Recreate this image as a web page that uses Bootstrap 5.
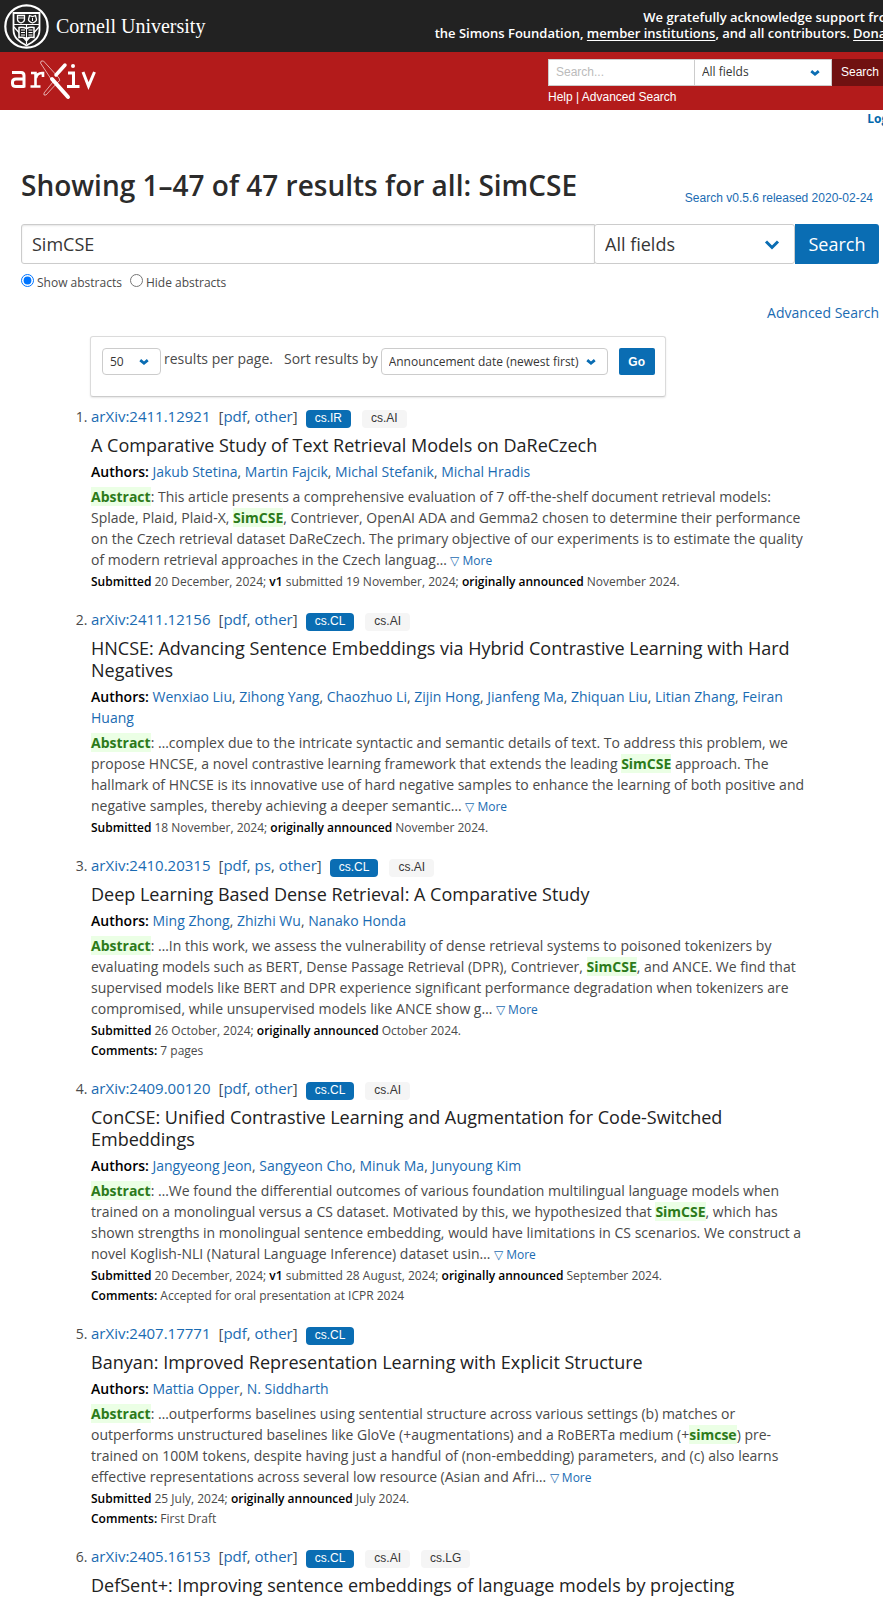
<!DOCTYPE html>
<html lang="en">
<head>
<meta charset="utf-8">
<meta name="viewport" content="width=device-width, initial-scale=1">
<title>Search | arXiv e-print repository</title>
<link href="https://cdn.jsdelivr.net/npm/bootstrap@5.3.0/dist/css/bootstrap.min.css" rel="stylesheet">
<style>
  :root { --ax-blue: #0a6db3; --ax-chev: url("data:image/svg+xml,%3Csvg xmlns='http://www.w3.org/2000/svg' viewBox='0 0 16 12'%3E%3Cpath d='M2 3l6 6 6-6' fill='none' stroke='%230a6db3' stroke-width='3'/%3E%3C/svg%3E"); --ax-chev-small: url("data:image/svg+xml,%3Csvg xmlns='http://www.w3.org/2000/svg' viewBox='0 0 16 12'%3E%3Cpath d='M2 3l6 5 6-5' fill='none' stroke='%230a6db3' stroke-width='4.500'/%3E%3C/svg%3E"); }
  body { font: 14px/21px "Open Sans", sans-serif; color: #4a4a4a; overflow-x: hidden; }
  a { color: #1a6bb2; text-decoration: none; }
  .arial { font-family: "Liberation Sans", Arial, sans-serif; }
  .wide { margin-right: -10px; }
  .banner { background: #222; height: 52px; color: #fff; }
  .banner a { color: #fff; text-decoration: underline; text-underline-offset: 2px; }
  .banner-name { font: 20px/24px "Liberation Serif", serif; margin-left: 7px; }
  .support { font-size: 13px; line-height: 16px; font-weight: 600; padding-bottom: 2px; margin-right: -6px; }
  .redbar { background: #b31b1b; height: 58px; color: #fff; }
  .redbar a { color: #fff; }
  .redbar form { padding-top: 7px; }
  .redbar .logo { margin: 7px 0 0 7px; }
  .redbar .form-control, .redbar .form-select, .redbar .btn { height: 27px; font-size: 12px; line-height: 18px; border-radius: 0; padding-top: 3px; padding-bottom: 4px; }
  .redbar .form-control { width: 147px; padding-left: 7px; border-color: #ccc; }
  .redbar .form-select { width: 137px; padding-left: 7px; border-color: #ccc; border-left: 0; font-family: "Open Sans", sans-serif; }
  .redbar .form-control::placeholder { color: #bbb; }
  .redbar .btn { background: #701111; color: #fff; width: 61px; padding-left: 8px; text-align: left; padding-top: 2px; }
  .help { font-size: 12px; line-height: 22px; }
  .form-select { background-image: var(--ax-chev-small); background-size: 10px 8px; background-position: right 11px center; color: #363636; }
  .form-select, .form-control { border-color: #ccc; }
  .login-row { margin-right: -20px; }
  .login { font-size: 12px; line-height: 18px; font-weight: 700; color: #0068ac; }
  .content { padding: 40px 4px 0 21px; }
  h1 { font-size: 28px; line-height: 35px; font-weight: 600; color: #2b2b2b; }
  .version { font-size: 12px; line-height: 16px; margin-right: 6px; }
  .title-row { padding-bottom: 18px; }
  .title-row h1 { padding-bottom: 3px; }
  .query .form-control, .query .form-select, .query .btn { height: 40px; font-size: 18px; line-height: 27px; padding-top: 5px; padding-bottom: 5px; border-radius: 3px; color: #363636; }
  .query .form-control { padding-left: 10px; border-top-right-radius: 0; border-bottom-right-radius: 0; box-shadow: inset 0 1px 2px rgba(10,10,10,.1); }
  .query .form-select { width: 201px; flex: none; margin-left: -1px; padding-left: 10px; background-image: var(--ax-chev); background-size: 16px 13px; background-position: right 14px center; }
  .query .btn { width: 84px; flex: none; padding-left: 0; padding-right: 0; background: var(--ax-blue); color: #fff; border: 0; border-radius: 0 3px 3px 0; }
  .choice { font-size: 12px; line-height: 18px; margin-top: 10px; }
  .choice input { width: 13px; height: 13px; margin: 0 3px 0 0; }
  .adv { margin-top: 10px; }
  .sortbox { margin: 13px 0 9px 69px; width: 576px; height: 61px; border: 1px solid #dbdbdb; border-bottom-color: #ccc; border-radius: 3px; box-shadow: 0 1px 2px rgba(10,10,10,.1); padding: 11px; }
  .sortbox .form-select { height: 27px; font-size: 12px; line-height: 18px; padding: 3px 24px 3px 7px; border-radius: 4px; }
  .sortbox .per { width: 59px; }
  .sortbox .order { width: 227px; margin-left: 3px; order: 0; }
  .sortbox .per-label { margin-left: 3px; }
  .sortbox .order-label { margin-left: 11px; }
  .sortbox .btn { height: 27px; width: 36px; margin-left: 11px; padding: 0; font-size: 12px; line-height: 22px; font-weight: 600; color: #fff; background: var(--ax-blue); border-radius: 2px; }
  .results { margin: 0 70px; padding: 0; }
  .results li { margin-bottom: 17px; }
  .ids { font-size: 15px; height: 21px; }
  .ids a { font-weight: 500; }
  .ids .files { margin-left: 8px; }
  .topic { height: 18px; line-height: 16px; padding: 0 9px; margin: 4px 0 0 11px; border-radius: 4px; font-size: 12px; background: #f5f5f5; color: #363636; }
  .topic.main { background: var(--ax-blue); color: #fff; margin-left: 8px; }
  .results h2 { font-size: 18px; line-height: 22px; font-weight: 500; color: #222; margin: 7px 0 5px; }
  .results p { margin: 0; }
  .results .authors { margin-bottom: 4px; }
  .results b { font-weight: 600; color: #000; }
  .results .hit { background: #ebffe5; color: #2c7a1a; font-weight: 700; }
  .results .note { font-size: 12px; line-height: 20px; margin-top: 1px; }
  .results .note + .note { margin-top: 0; }
  .results .more { font-size: 12px; }
</style>
</head>
<body>
<header>
  <div class="banner wide d-flex align-items-center justify-content-between">
    <div class="d-flex align-items-center ps-1">
      <svg width="45" height="45" viewBox="0 0 45 45" fill="none" stroke="#fff" aria-hidden="true">
        <circle cx="22.500" cy="22.500" r="21.200" stroke-width="2.200"/>
        <path d="M9.500 9h26v17c0 8-6 12-13 15.500C15.500 38 9.500 34 9.500 26z" stroke-width="1.800"/>
        <path d="M10 20.500h25M22.500 20v20M10 23l12.500 14L35 23" stroke-width="1.200"/>
        <path d="M13.500 11.500h7v4c0 2-2 3-3.500 3.500-1.500-.5-3.500-1.500-3.500-3.500zM25.500 11.500l3 1 3-1 1 4c0 2-2.500 3-4 3.500-1.500-.5-4-1.500-4-3.500z" stroke-width="1.300"/>
        <path d="M14 14h6M28.500 14v3" stroke-width="1"/>
        <path d="M15 23.500q4-1 7.500 1 3.500-2 7.500-1v10q-4-1-7.500 1-3.500-2-7.500-1z" fill="#222" stroke-width="1.500"/>
        <path d="M17 26h4M17 28.500h4M17 31h4M24.500 26h4M24.500 28.500h4M24.500 31h4M22.500 24v10" stroke-width="1"/>
      </svg>
      <span class="banner-name">Cornell University</span>
    </div>
    <div class="support text-end">We gratefully acknowledge support from<br>the Simons Foundation, <a href="#">member institutions</a>, and all contributors. <a href="#">Donate</a></div>
  </div>
  <div class="redbar wide d-flex justify-content-between">
    <a href="#" class="logo" aria-label="arXiv">
      <svg width="90" height="44" viewBox="7 60 90 44" fill="none" stroke="#fff" stroke-width="3">
        <path d="M12 73.500h9q3 0 3 3V88.500M24 80h-8q-3.500 0-3.500 3v1.500q0 3 3.500 3h8.500"/>
        <path d="M31 74h4.500V87M30.500 87.500h10M36 79q1-5 6-5h1v4" stroke-width="2.600"/>
        <path d="M68 74h5.500V87M67 87.500h12.500"/>
        <path d="M83 73l5.500 14L94.500 73"/>
        <circle cx="73" cy="67" r="2" fill="#fff" stroke="none"/>
        <path d="M40.500 64q0-3 3-2l15.500 17q2 3-1 4L46 96q-3 1-2-2l9-11z" stroke-width=".8" opacity=".8"/>
        <path d="M65 66l-9 10" stroke-width="3.500" stroke-linecap="round"/>
        <path d="M52 80l16 18" stroke-width="4" stroke-linecap="round"/>
      </svg>
    </a>
    <form class="arial">
      <div class="d-flex">
        <input class="form-control" type="text" placeholder="Search..." aria-label="Search term">
        <select class="form-select" aria-label="Field"><option>All fields</option></select>
        <button class="btn" type="button">Search</button>
      </div>
      <div class="help"><a href="#">Help</a> | <a href="#">Advanced Search</a></div>
    </form>
  </div>
  <div class="login-row d-flex justify-content-end"><a class="login" href="#">Log in</a></div>
</header>

<main class="content">
    <div class="title-row d-flex justify-content-between">
      <h1 class="m-0">Showing 1–47 of 47 results for all: SimCSE</h1>
      <a class="version arial align-self-end" href="#">Search v0.5.6 released 2020-02-24</a>
    </div>
    <form>
      <div class="query d-flex">
        <input class="form-control" type="text" value="SimCSE" aria-label="Search term or terms">
        <select class="form-select" aria-label="Field to search"><option>All fields</option></select>
        <button class="btn" type="button">Search</button>
      </div>
      <div class="choice d-flex">
        <label class="me-2"><input type="radio" name="abstracts" checked>Show abstracts</label>
        <label><input type="radio" name="abstracts">Hide abstracts</label>
      </div>
      <div class="adv text-end"><a href="#">Advanced Search</a></div>
    </form>
    <form class="sortbox d-flex align-items-start">
      <select class="form-select per flex-shrink-0" id="size"><option>50</option></select>
      <label class="per-label text-nowrap" for="size">results per page.</label>
      <label class="order-label text-nowrap" for="order">Sort results by</label>
      <select class="form-select order flex-shrink-0" id="order"><option>Announcement date (newest first)</option></select>
      <button class="btn arial flex-shrink-0" type="button">Go</button>
    </form>

    <ol class="results">
      <li>
        <div class="ids d-flex align-items-start"><a href="#">arXiv:2411.12921</a><span class="files">[<a href="#">pdf</a>, <a href="#">other</a>]</span><span class="topic main arial">cs.IR</span><span class="topic arial">cs.AI</span></div>
        <h2>A Comparative Study of Text Retrieval Models on DaReCzech</h2>
        <p class="authors"><b>Authors:</b> <a href="#">Jakub Stetina</a>, <a href="#">Martin Fajcik</a>, <a href="#">Michal Stefanik</a>, <a href="#">Michal Hradis</a></p>
        <p><span class="hit">Abstract</span>: This article presents a comprehensive evaluation of 7 off-the-shelf document retrieval models: Splade, Plaid, Plaid-X, <span class="hit">SimCSE</span>, Contriever, OpenAI ADA and Gemma2 chosen to determine their performance on the Czech retrieval dataset DaReCzech. The primary objective of our experiments is to estimate the quality of modern retrieval approaches in the Czech languag… <a class="more" href="#">▽ More</a></p>
        <p class="note"><b>Submitted</b> 20 December, 2024; <b>v1</b> submitted 19 November, 2024; <b>originally announced</b> November 2024.</p>
      </li>
      <li>
        <div class="ids d-flex align-items-start"><a href="#">arXiv:2411.12156</a><span class="files">[<a href="#">pdf</a>, <a href="#">other</a>]</span><span class="topic main arial">cs.CL</span><span class="topic arial">cs.AI</span></div>
        <h2>HNCSE: Advancing Sentence Embeddings via Hybrid Contrastive Learning with Hard Negatives</h2>
        <p class="authors"><b>Authors:</b> <a href="#">Wenxiao Liu</a>, <a href="#">Zihong Yang</a>, <a href="#">Chaozhuo Li</a>, <a href="#">Zijin Hong</a>, <a href="#">Jianfeng Ma</a>, <a href="#">Zhiquan Liu</a>, <a href="#">Litian Zhang</a>, <a href="#">Feiran Huang</a></p>
        <p><span class="hit">Abstract</span>: …complex due to the intricate syntactic and semantic details of text. To address this problem, we propose HNCSE, a novel contrastive learning framework that extends the leading <span class="hit">SimCSE</span> approach. The hallmark of HNCSE is its innovative use of hard negative samples to enhance the learning of both positive and negative samples, thereby achieving a deeper semantic… <a class="more" href="#">▽ More</a></p>
        <p class="note"><b>Submitted</b> 18 November, 2024; <b>originally announced</b> November 2024.</p>
      </li>
      <li>
        <div class="ids d-flex align-items-start"><a href="#">arXiv:2410.20315</a><span class="files">[<a href="#">pdf</a>, <a href="#">ps</a>, <a href="#">other</a>]</span><span class="topic main arial">cs.CL</span><span class="topic arial">cs.AI</span></div>
        <h2>Deep Learning Based Dense Retrieval: A Comparative Study</h2>
        <p class="authors"><b>Authors:</b> <a href="#">Ming Zhong</a>, <a href="#">Zhizhi Wu</a>, <a href="#">Nanako Honda</a></p>
        <p><span class="hit">Abstract</span>: …In this work, we assess the vulnerability of dense retrieval systems to poisoned tokenizers by evaluating models such as BERT, Dense Passage Retrieval (DPR), Contriever, <span class="hit">SimCSE</span>, and ANCE. We find that supervised models like BERT and DPR experience significant performance degradation when tokenizers are compromised, while unsupervised models like ANCE show g… <a class="more" href="#">▽ More</a></p>
        <p class="note"><b>Submitted</b> 26 October, 2024; <b>originally announced</b> October 2024.</p>
        <p class="note"><b>Comments:</b> 7 pages</p>
      </li>
      <li>
        <div class="ids d-flex align-items-start"><a href="#">arXiv:2409.00120</a><span class="files">[<a href="#">pdf</a>, <a href="#">other</a>]</span><span class="topic main arial">cs.CL</span><span class="topic arial">cs.AI</span></div>
        <h2>ConCSE: Unified Contrastive Learning and Augmentation for Code-Switched Embeddings</h2>
        <p class="authors"><b>Authors:</b> <a href="#">Jangyeong Jeon</a>, <a href="#">Sangyeon Cho</a>, <a href="#">Minuk Ma</a>, <a href="#">Junyoung Kim</a></p>
        <p><span class="hit">Abstract</span>: …We found the differential outcomes of various foundation multilingual language models when trained on a monolingual versus a CS dataset. Motivated by this, we hypothesized that <span class="hit">SimCSE</span>, which has shown strengths in monolingual sentence embedding, would have limitations in CS scenarios. We construct a novel Koglish-NLI (Natural Language Inference) dataset usin… <a class="more" href="#">▽ More</a></p>
        <p class="note"><b>Submitted</b> 20 December, 2024; <b>v1</b> submitted 28 August, 2024; <b>originally announced</b> September 2024.</p>
        <p class="note"><b>Comments:</b> Accepted for oral presentation at ICPR 2024</p>
      </li>
      <li>
        <div class="ids d-flex align-items-start"><a href="#">arXiv:2407.17771</a><span class="files">[<a href="#">pdf</a>, <a href="#">other</a>]</span><span class="topic main arial">cs.CL</span></div>
        <h2>Banyan: Improved Representation Learning with Explicit Structure</h2>
        <p class="authors"><b>Authors:</b> <a href="#">Mattia Opper</a>, <a href="#">N. Siddharth</a></p>
        <p><span class="hit">Abstract</span>: …outperforms baselines using sentential structure across various settings (b) matches or outperforms unstructured baselines like GloVe (+augmentations) and a RoBERTa medium (+<span class="hit">simcse</span>) pre-trained on 100M tokens, despite having just a handful of (non-embedding) parameters, and (c) also learns effective representations across several low resource (Asian and Afri… <a class="more" href="#">▽ More</a></p>
        <p class="note"><b>Submitted</b> 25 July, 2024; <b>originally announced</b> July 2024.</p>
        <p class="note"><b>Comments:</b> First Draft</p>
      </li>
      <li>
        <div class="ids d-flex align-items-start"><a href="#">arXiv:2405.16153</a><span class="files">[<a href="#">pdf</a>, <a href="#">other</a>]</span><span class="topic main arial">cs.CL</span><span class="topic arial">cs.AI</span><span class="topic arial">cs.LG</span></div>
        <h2>DefSent+: Improving sentence embeddings of language models by projecting definition sentences into a quasi-isotropic or isotropic vector space of unlimited dictionary entries</h2>
      </li>
    </ol>
</main>
<script src="https://cdn.jsdelivr.net/npm/bootstrap@5.3.0/dist/js/bootstrap.bundle.min.js"></script>
</body>
</html>
